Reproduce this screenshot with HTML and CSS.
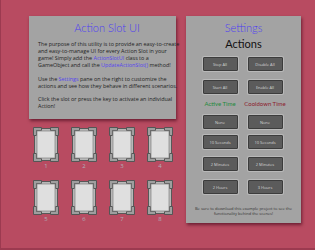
FILE: index.html
```html
<!DOCTYPE html>
<html>
<head>
    <meta charset="UTF-8">
    <title>Action Slot UI</title>
    <link rel="stylesheet" href="styles.css">
</head>
<body>
    <div class="page">
        <div class="leftcol">
            <section class="panel info">
                <h1 class="title">Action Slot UI</h1>
                <p>The purpose of this utility is to provide an easy-to-create<br>and easy-to-manage UI for every Action Slot in your<br>game! Simply add the <span class="link">ActionSlotUI</span> class to a<br>GameObject and call the <span class="link">UpdateActionSlot()</span> method!</p>
                <p>Use the <span class="link">Settings</span> pane on the right to customize the<br>actions and see how they behave in different scenarios.</p>
                <p>Click the slot or press the key to activate an individual<br>Action!</p>
            </section>
            <div class="slots">
                <div class="slot"><svg viewBox="0 0 26 35"><use href="#slotshape"/></svg><span class="num">1</span></div>
                <div class="slot"><svg viewBox="0 0 26 35"><use href="#slotshape"/></svg><span class="num">2</span></div>
                <div class="slot"><svg viewBox="0 0 26 35"><use href="#slotshape"/></svg><span class="num">3</span></div>
                <div class="slot"><svg viewBox="0 0 26 35"><use href="#slotshape"/></svg><span class="num">4</span></div>
                <div class="slot"><svg viewBox="0 0 26 35"><use href="#slotshape"/></svg><span class="num">5</span></div>
                <div class="slot"><svg viewBox="0 0 26 35"><use href="#slotshape"/></svg><span class="num">6</span></div>
                <div class="slot"><svg viewBox="0 0 26 35"><use href="#slotshape"/></svg><span class="num">7</span></div>
                <div class="slot"><svg viewBox="0 0 26 35"><use href="#slotshape"/></svg><span class="num">8</span></div>
            </div>
        </div>
        <section class="panel settings">
            <h1 class="title">Settings</h1>
            <h2 class="actions">Actions</h2>
            <div class="btnrow r1"><button>Stop All</button><button>Disable All</button></div>
            <div class="btnrow r2"><button>Start All</button><button>Enable All</button></div>
            <div class="labels"><span class="active">Active Time</span><span class="cooldown">Cooldown Time</span></div>
            <div class="btnrow r3"><button>None</button><button>None</button></div>
            <div class="btnrow r4"><button>10 Seconds</button><button>10 Seconds</button></div>
            <div class="btnrow r5"><button>2 Minutes</button><button>2 Minutes</button></div>
            <div class="btnrow r6"><button>2 Hours</button><button>3 Hours</button></div>
            <p class="note">Be sure to download this example project to see the<br>functionality behind the scenes!</p>
        </section>
    </div>

    <svg width="0" height="0" style="position:absolute">
        <defs>
            <g id="slotshape">
                <rect x="1.5" y="1.5" width="23" height="32" fill="#b8b8b8" stroke="#585858" stroke-width="1"/>
                <path d="M0.5 0.5h8v3h-5v5h-3z" fill="#9e9e9e" stroke="#555" stroke-width="1"/>
                <path d="M25.5 0.5h-8v3h5v5h3z" fill="#9e9e9e" stroke="#555" stroke-width="1"/>
                <path d="M0.5 34.5h8v-3h-5v-5h-3z" fill="#9e9e9e" stroke="#555" stroke-width="1"/>
                <path d="M25.5 34.5h-8v-3h5v-5h3z" fill="#9e9e9e" stroke="#555" stroke-width="1"/>
                <rect x="4" y="4" width="18" height="27" fill="#dfdfdf" stroke="#8c8c8c" stroke-width="0.8"/>
            </g>
        </defs>
    </svg>
</body>
</html>
```

FILE: styles.css
```css
html, body {
    margin: 0;
    padding: 0;
}
body {
    background-color: #b84b61;
    font-family: "Open Sans", "Liberation Sans", sans-serif;
}
.page {
    width: 315px;
    height: 250px;
    box-sizing: border-box;
    border-left: 1px solid #9c3a50;
    border-bottom: 2px solid #9c3a50;
    padding: 16px 0 0 28px;
    display: flex;
    gap: 10px;
    align-items: flex-start;
}
.panel {
    background-color: #a3a3a3;
    box-shadow: 1px 2px 3px rgba(60, 0, 20, 0.6);
    box-sizing: border-box;
}
.title {
    margin: 0;
    font-family: "Lato", sans-serif;
    font-weight: 300;
    font-size: 11px;
    line-height: 13px;
    color: #4d3df2;
    text-align: center;
}
.info {
    width: 147px;
    height: 103px;
    padding: 5px 0 0 9px;
}
.info p {
    margin: 7px 0 0;
    font-size: 5.4px;
    line-height: 7px;
    color: #1e1e1e;
    white-space: nowrap;
}
.info p:first-of-type {
    margin-top: 6.5px;
}
.info p:last-of-type {
    margin-top: 6px;
}
.link {
    color: #5646ee;
}
.slots {
    display: grid;
    grid-template-columns: repeat(4, 26px);
    column-gap: 12px;
    row-gap: 9px;
    padding: 8px 0 0 4px;
}
.slot {
    display: flex;
    flex-direction: column;
    align-items: center;
}
.slot svg {
    width: 26px;
    height: 35px;
    display: block;
}
.num {
    display: block;
    height: 9px;
    font-family: "Open Sans", sans-serif;
    font-size: 6px;
    line-height: 9px;
    color: #b0b0ba;
}
.settings {
    width: 115px;
    height: 207px;
    padding: 5px 0 0 0;
    display: flex;
    flex-direction: column;
    align-items: center;
}
.actions {
    margin: 3px 0 0;
    font-family: "Lato", sans-serif;
    font-weight: 400;
    font-size: 11px;
    line-height: 13px;
    color: #111;
}
.btnrow {
    display: flex;
    gap: 10px;
    margin-left: -2px;
}
.btnrow button {
    width: 35px;
    height: 14px;
    padding: 0;
    background-color: #5b5b5b;
    border: 1px solid #3c3c3c;
    box-shadow: 0 0 0 1px #b9b9b9;
    border-radius: 1px;
    font-family: "Open Sans", sans-serif;
    font-size: 4px;
    color: #d6d6d6;
}
.r1 { margin-top: 7px; }
.r2 { margin-top: 9px; }
.r3 { margin-top: 7px; }
.r4 { margin-top: 6px; }
.r5 { margin-top: 8px; }
.r6 { margin-top: 9px; }
.labels {
    display: flex;
    gap: 10px;
    margin-top: 6px;
    margin-left: -2px;
    font-family: "Lato", sans-serif;
    font-size: 6px;
    line-height: 8px;
}
.labels span {
    width: 35px;
    white-space: nowrap;
    display: flex;
    justify-content: center;
}
.active { color: #1f8a3c; }
.cooldown { color: #8c1b2e; }
.note {
    margin: 11.5px 0 0;
    text-align: center;
    font-size: 4px;
    line-height: 5px;
    color: #333;
    white-space: nowrap;
}
```
